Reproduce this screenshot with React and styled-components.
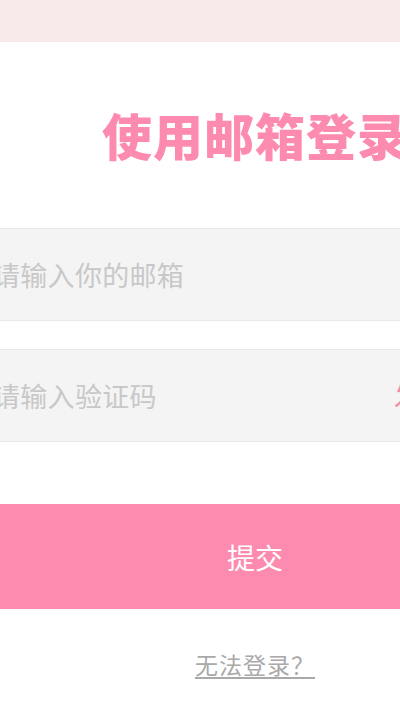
import React from "react";
import styled, { createGlobalStyle } from "styled-components";

const Global = createGlobalStyle`
  html, body { margin: 0; padding: 0; background: #ffffff; overflow: hidden; }
  body { font-family: "Noto Sans CJK SC", "Noto Sans", sans-serif; }
`;

const Viewport = styled.div`
  width: 400px;
  height: 711px;
  overflow: hidden;
  position: relative;
  background: #fff;
`;

const Header = styled.div`
  height: 42px;
  background: #f8eaea;
`;

const Page = styled.div`
  width: 630px;
  margin-left: -60px;
  display: flex;
  flex-direction: column;
  align-items: center;
`;

const Title = styled.h1`
  margin: 62px 0 0;
  font-size: 50px;
  line-height: 60px;
  font-weight: 900;
  color: #fd8bb0;
  letter-spacing: 1px;
  white-space: nowrap;
`;

const Form = styled.div`
  align-self: stretch;
  margin: 64px 28px 0;
  display: flex;
  flex-direction: column;
  gap: 28px;
`;

const Field = styled.div`
  height: 91px;
  background: #f4f4f4;
  border: 1px solid #e9e9e9;
  display: flex;
  align-items: center;
  padding: 0 12px 0 24px;
`;

const Placeholder = styled.span`
  flex: 1;
  font-size: 27px;
  color: #c8c8c8;
  letter-spacing: 0.3px;
  white-space: nowrap;
`;

const SendCode = styled.span`
  font-size: 27px;
  color: #f08aa8;
  white-space: nowrap;
`;

const Submit = styled.button`
  align-self: stretch;
  margin: 62px 0 0;
  height: 105px;
  border: none;
  background: #fd8bb0;
  color: #fff;
  font-family: "Noto Sans CJK SC", sans-serif;
  font-size: 28px;
  padding: 0;
`;

const Help = styled.a`
  margin-top: 40px;
  font-size: 23px;
  color: #a9a9a9;
  text-decoration: underline;
  text-underline-offset: 3px;
  letter-spacing: 1px;
  line-height: 30px;
`;

export default function App() {
  return (
    <Viewport>
      <Global />
      <Header />
      <Page>
        <Title>使用邮箱登录</Title>
        <Form>
          <Field>
            <Placeholder>请输入你的邮箱</Placeholder>
          </Field>
          <Field>
            <Placeholder>请输入验证码</Placeholder>
            <SendCode>发送验证码</SendCode>
          </Field>
        </Form>
        <Submit>提交</Submit>
        <Help>无法登录？</Help>
      </Page>
    </Viewport>
  );
}
